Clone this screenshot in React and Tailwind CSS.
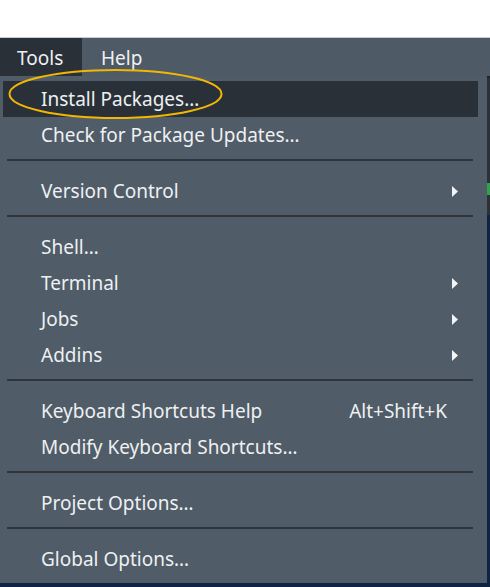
import React from "react";

const items = [
  { label: "Install Packages…", active: true },
  { label: "Check for Package Updates…" },
  { sep: true },
  { label: "Version Control", sub: true },
  { sep: true },
  { label: "Shell…" },
  { label: "Terminal", sub: true },
  { label: "Jobs", sub: true },
  { label: "Addins", sub: true },
  { sep: true },
  { label: "Keyboard Shortcuts Help", shortcut: "Alt+Shift+K" },
  { label: "Modify Keyboard Shortcuts…" },
  { sep: true },
  { label: "Project Options…" },
  { sep: true },
  { label: "Global Options…" },
];

function Arrow() {
  return (
    <svg width="6" height="11" viewBox="0 0 6 11" className="block">
      <path d="M0 0 L6 5.5 L0 11 Z" fill="#f2f4f6" />
    </svg>
  );
}

export default function App() {
  return (
    <div
      className="relative w-[490px] h-[587px] overflow-hidden bg-[#0f2345] flex flex-col text-[#eef0f2]"
      style={{ fontFamily: '"Noto Sans", "Open Sans", sans-serif' }}
    >
      <div className="h-[38px] bg-white border-b border-[#c9cdd1]" />
      <div className="h-[38px] bg-[#4e5a65] flex items-stretch text-[19px] pt-[3px]">
        <div className="w-[82px] -mt-[3px] pt-[3px] bg-[#2a3037] flex items-center pl-[17px]">Tools</div>
        <div className="flex items-center pl-[19px]">Help</div>
      </div>
      <div className="flex">
        <div className="w-[487px] bg-[#505c67] pt-[5px] pb-[6px] text-[19px]">
          {items.map((it, i) =>
            it.sep ? (
              <div key={i} className="pt-[6px] pb-[12px] pl-[7px] pr-[14px]">
                <div className="h-[2px] bg-[#2f353b]" />
              </div>
            ) : (
              <div
                key={i}
                className={
                  "h-[36px] ml-[3px] mr-[9px] flex items-center pl-[38px] pr-[20px] pt-[1px] " +
                  (it.active ? "bg-[#2a3037]" : "")
                }
              >
                <span className="flex-1">{it.label}</span>
                {it.shortcut && <span className="mr-[11px]">{it.shortcut}</span>}
                {it.sub && <Arrow />}
              </div>
            )
          )}
        </div>
        <div className="w-[3px] flex flex-col">
          <div className="h-[2px] bg-[#1e242a]" />
          <div className="h-[105px] bg-[#2b3137]" />
          <div className="h-[12px] bg-[#2fa34a]" />
          <div className="h-[20px] bg-[#2b3137]" />
        </div>
      </div>
      <svg className="absolute left-0 top-0 pointer-events-none" width="490" height="587">
        <ellipse cx="115.5" cy="94" rx="106" ry="24" fill="none" stroke="#f2b705" strokeWidth="2" />
      </svg>
    </div>
  );
}
